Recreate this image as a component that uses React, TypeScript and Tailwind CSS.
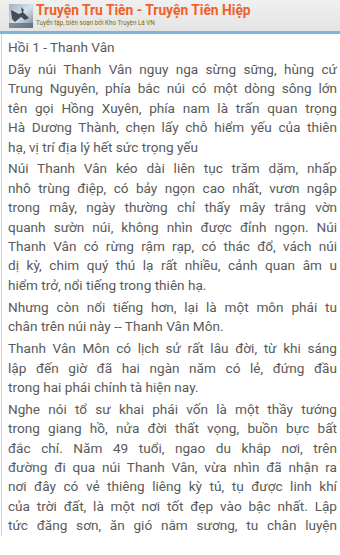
import React from 'react';

const paragraphs: string[][] = [
  ['Hồi 1 - Thanh Vân'],
  [
    'Dãy núi Thanh Vân nguy nga sừng sững, hùng cứ',
    'Trung Nguyên, phía bắc núi có một dòng sông lớn',
    'tên gọi Hồng Xuyên, phía nam là trấn quan trọng',
    'Hà Dương Thành, chẹn lấy chỗ hiểm yếu của thiên',
    'hạ, vị trí địa lý hết sức trọng yếu',
  ],
  [
    'Núi Thanh Vân kéo dài liên tục trăm dặm, nhấp',
    'nhô trùng điệp, có bảy ngọn cao nhất, vươn ngập',
    'trong mây, ngày thường chỉ thấy mây trắng vờn',
    'quanh sườn núi, không nhìn được đỉnh ngọn. Núi',
    'Thanh Vân có rừng rậm rạp, có thác đổ, vách núi',
    'dị kỳ, chim quý thú lạ rất nhiều, cảnh quan âm u',
    'hiểm trở, nổi tiếng trong thiên hạ.',
  ],
  [
    'Nhưng còn nổi tiếng hơn, lại là một môn phái tu',
    'chân trên núi này -- Thanh Vân Môn.',
  ],
  [
    'Thanh Vân Môn có lịch sử rất lâu đời, từ khi sáng',
    'lập đến giờ đã hai ngàn năm có lẻ, đứng đầu',
    'trong hai phái chính tà hiện nay.',
  ],
  [
    'Nghe nói tổ sư khai phái vốn là một thầy tướng',
    'trong giang hồ, nửa đời thất vọng, buồn bực bất',
    'đắc chí. Năm 49 tuổi, ngao du khắp nơi, trên',
    'đường đi qua núi Thanh Vân, vừa nhìn đã nhận ra',
    'nơi đây có vẻ thiêng liêng kỳ tú, tụ được linh khí',
    'của trời đất, là một nơi tốt đẹp vào bậc nhất. Lập',
    'tức đăng sơn, ăn gió nằm sương, tu chân luyện',
  ],
];

function Logo() {
  return (
    <svg width="24" height="24" viewBox="0 0 24 24" className="shrink-0">
      <defs>
        <linearGradient id="lg" x1="0" y1="0" x2="1" y2="1">
          <stop offset="0" stopColor="#9fb3c4" />
          <stop offset="0.5" stopColor="#d7e0e8" />
          <stop offset="1" stopColor="#6f8799" />
        </linearGradient>
      </defs>
      <rect width="24" height="24" fill="url(#lg)" />
      <path d="M2 6 L10 10 L14 8 L20 14 L16 16 L12 13 L6 18 L3 15 Z" fill="#2b3440" opacity="0.85" />
      <path d="M12 3 L15 6 L13 9 Z" fill="#3a4656" />
      <rect x="0" y="19" width="24" height="5" fill="#56697a" opacity="0.7" />
    </svg>
  );
}

export default function App() {
  const lastPara = paragraphs.length - 1;
  return (
    <div className="w-[340px] h-[555px] overflow-hidden bg-white" style={{ fontFamily: 'Roboto, "Noto Sans", sans-serif' }}>
      <div className="h-[31px] bg-gradient-to-b from-[#f0f0f0] to-[#e4e4e4] flex items-center pl-[9px] gap-[3px]">
        <Logo />
        <div className="flex flex-col leading-none">
          <span className="text-[13.8px] font-bold text-[#f0602a]">Truyện Tru Tiên - Truyện Tiên Hiệp</span>
          <span className="text-[6.3px] text-[#7d6d00] mt-[2px]">Tuyển tập, biên soạn bởi Kho Truyện Lá VN</span>
        </div>
      </div>
      <div className="h-[3px] bg-[#79b6da]" />
      <div className="border-l border-[#d0d0d0] ml-[1px] pl-[6px] pr-[3px] pt-[4px] text-[13.6px] leading-[19.4px] text-[#5a5a5a]">
        {paragraphs.map((lines, pi) => (
          <div key={pi} className={pi === lastPara ? '' : 'mb-[2.5px]'}>
            {lines.map((line, li) => {
              const justify = li < lines.length - 1 || pi === lastPara;
              return (
                <div
                  key={li}
                  className={justify ? 'whitespace-nowrap text-justify [text-align-last:justify]' : 'whitespace-nowrap'}
                >
                  {line}
                </div>
              );
            })}
          </div>
        ))}
      </div>
    </div>
  );
}
